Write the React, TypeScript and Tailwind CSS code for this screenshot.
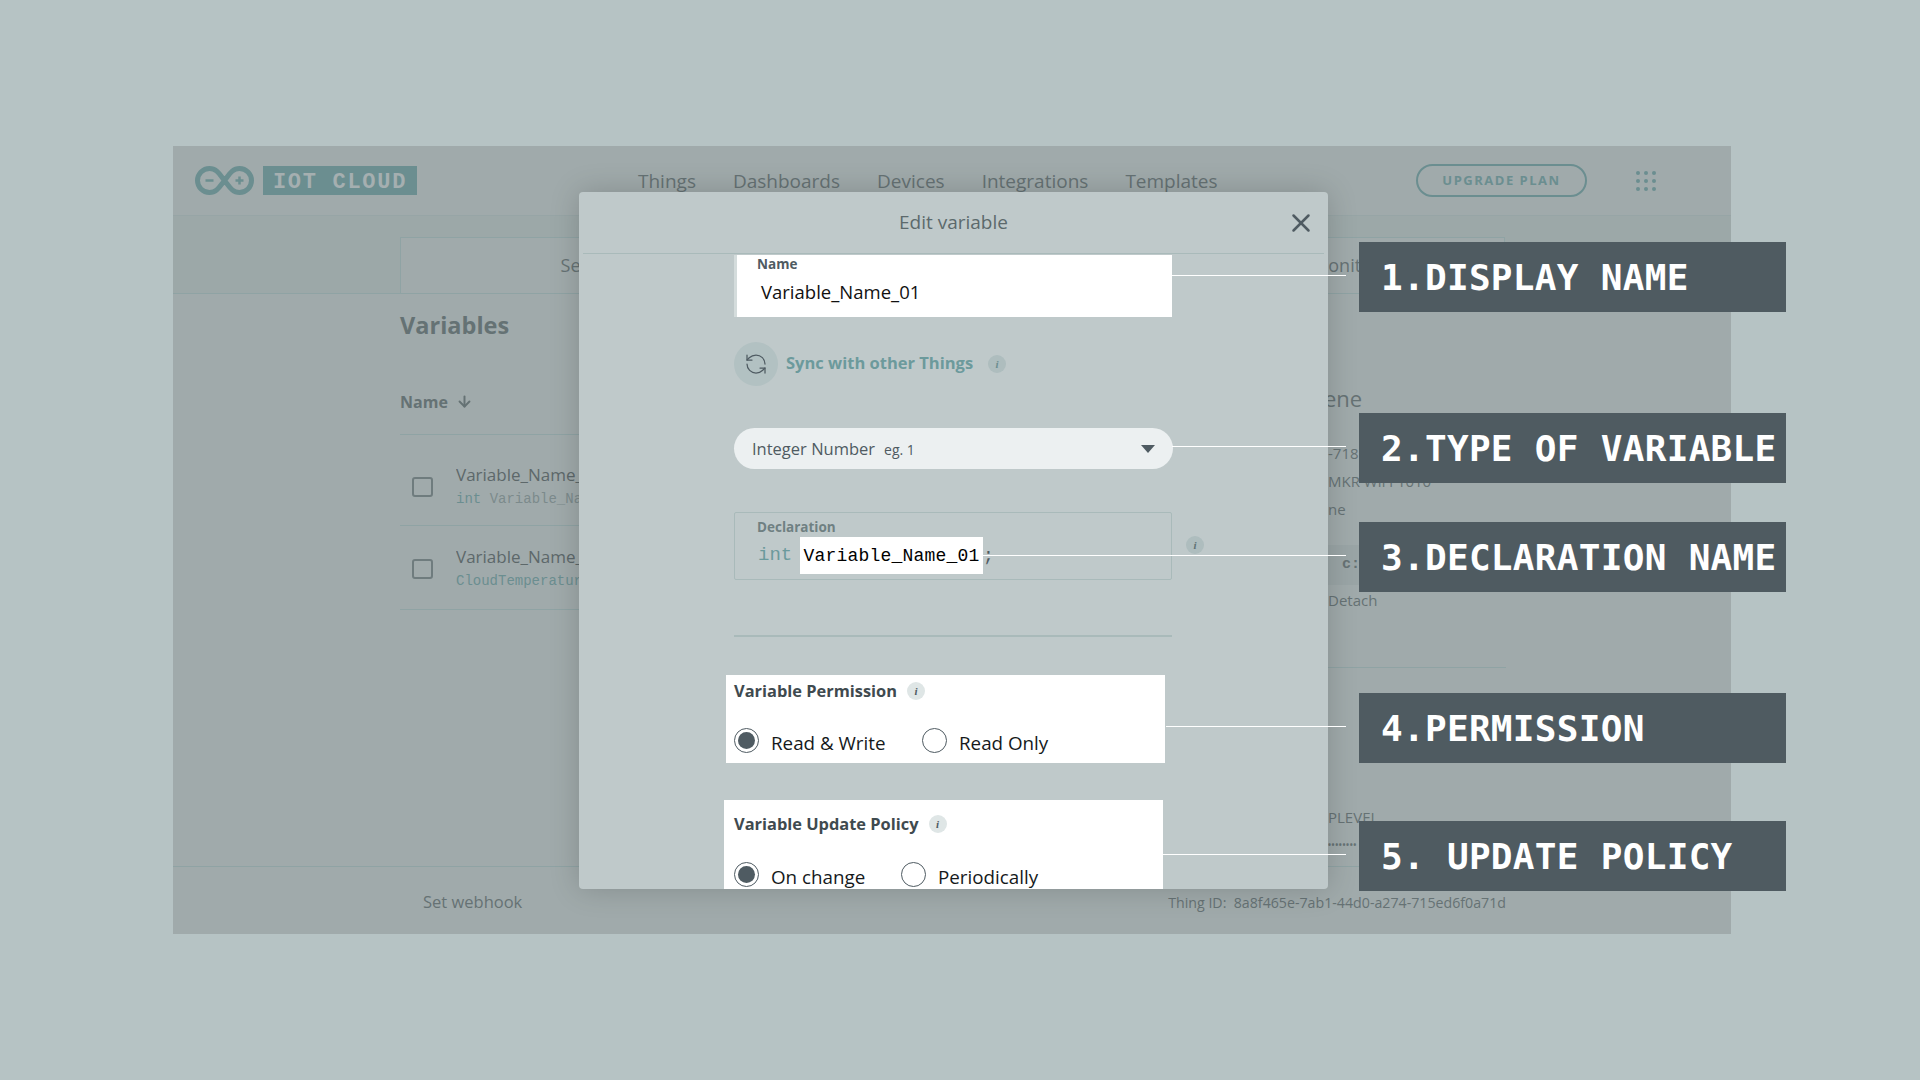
import { ArrowDown, RefreshCcw, X } from "lucide-react";

const sans = "font-['Open_Sans',sans-serif]";
const mono = "font-['Liberation_Mono',monospace]";

function InfoDot({ className = "bg-[#aebdbe] text-[#5f7375]" }: { className?: string }) {
  return (
    <span className={`flex h-[18px] w-[18px] shrink-0 items-center justify-center rounded-full font-['Liberation_Serif',serif] text-[11px] font-bold italic leading-none ${className}`}>
      i
    </span>
  );
}

function Radio({ checked, label, className }: { checked?: boolean; label: string; className?: string }) {
  return (
    <div className={`flex items-center gap-[12px] ${className ?? ""}`}>
      <span className="flex h-[25px] w-[25px] shrink-0 items-center justify-center rounded-full border-[1.5px] border-[#4f5b62] bg-white">
        {checked && <span className="h-[17px] w-[17px] rounded-full bg-[#4f5b62]" />}
      </span>
      <span className="translate-y-[2px] text-[18.8px] leading-[24px] text-[#15191b]">{label}</span>
    </div>
  );
}

function Logo() {
  return (
    <svg width="59" height="29" viewBox="0 0 59 29" fill="none" stroke="#6b8e90">
      <path
        strokeWidth="5"
        d="M14.5 2.5C22 2.5 25 9 29.5 14.5C34 20 37 26.5 44.5 26.5A12 12 0 0 0 44.5 2.5C37 2.5 34 9 29.5 14.5C25 20 22 26.5 14.5 26.5A12 12 0 0 1 14.5 2.5Z"
      />
      <path strokeWidth="2.5" d="M10.5 14.5h8M40.5 14.5h8M44.5 10.5v8" />
    </svg>
  );
}

function VariableRow({ name, type, decl, className }: { name: string; type: string; decl?: string; className?: string }) {
  return (
    <div className={`flex items-center border-b border-[#8fa3a4] ${className ?? ""}`}>
      <span className="ml-[12px] h-[20px] w-[21px] shrink-0 rounded-[3px] border-2 border-[#6f7c7e]" />
      <div className="ml-[23px] w-[300px] overflow-hidden whitespace-nowrap">
        <div className="text-[17px] leading-[24px] text-[#5d686a]">{name}</div>
        <div className={`${mono} text-[14px] leading-[24px] text-[#6b8e90]`}>
          {type}
          {decl && <span className="text-[#7c8a8c]"> {decl}</span>}
        </div>
      </div>
    </div>
  );
}

function BackgroundApp() {
  return (
    <div className={`${sans} relative flex h-[788px] w-[1558px] flex-col overflow-hidden bg-[#a0aaab]`}>
      <header className="flex h-[70px] shrink-0 items-center border-b border-[#97a5a6] pl-[22px]">
        <Logo />
        <div className={`${mono} ml-[9px] flex h-[29px] w-[154px] items-center justify-center bg-[#6b8e90] pt-[4px] text-[22px] font-bold tracking-[1.7px] text-[#a5afb0]`}>
          IOT CLOUD
        </div>
        <nav className="ml-[221px] mt-[2px] flex gap-[37px] text-[19px] text-[#667274]">
          <span>Things</span>
          <span>Dashboards</span>
          <span>Devices</span>
          <span>Integrations</span>
          <span>Templates</span>
        </nav>
        <div className="ml-auto mr-[75px] flex items-center gap-[49px]">
          <div className="flex h-[33px] w-[171px] items-center justify-center rounded-full border-2 border-[#6b8e90] pt-[1px] text-[13px] font-bold tracking-[1.5px] text-[#6b8e90]">
            UPGRADE PLAN
          </div>
          <div className="grid grid-cols-3 gap-[4px]">
            {Array.from({ length: 9 }).map((_, i) => (
              <span key={i} className="h-[4px] w-[4px] rounded-full bg-[#6b8e90]" />
            ))}
          </div>
        </div>
      </header>

      <div className="flex h-[78px] shrink-0 items-end border-b border-[#8fa3a4] bg-[#9ca8a8] pl-[227px]">
        <div className="grid h-[56px] w-[1105px] grid-cols-3 items-center border-x border-t border-[#8fa3a4] bg-[#a0aaab] text-center text-[18px] text-[#667274]">
          <span>Setup</span>
          <span>Sketch</span>
          <span>Serial Monitor</span>
        </div>
      </div>

      <div className="flex flex-1 pl-[227px]">
        <div className="w-[600px]">
          <h2 className="mt-[15px] text-[23.5px] font-bold leading-[32px] text-[#657274]">Variables</h2>
          <div className="mt-[46px] flex h-[48px] items-start gap-[8px] border-b border-[#8fa3a4] pt-[3px] text-[16px] font-bold text-[#657274]">
            <span className="leading-[24px]">Name</span>
            <ArrowDown size={17} strokeWidth={2.75} className="mt-[3px]" />
          </div>
          <VariableRow name="Variable_Name_01" type="int" decl="Variable_Name_01;" className="h-[91px] pt-[13px]" />
          <VariableRow name="Variable_Name_02" type="CloudTemperature" decl="Variable_Name_02;" className="h-[84px] pt-[2px]" />
        </div>
      </div>

      <footer className="flex h-[68px] shrink-0 items-center border-t border-[#8fa3a4] pl-[250px] pr-[225px] pt-[4px] text-[#667274]">
        <span className="text-[16.5px]">Set webhook</span>
        <span className="ml-auto text-[14.2px]">
          Thing ID:&nbsp;&nbsp;8a8f465e-7ab1-44d0-a274-715ed6f0a71d
        </span>
      </footer>

      {/* right hand column, mostly covered by the dialog */}
      <div className="absolute left-[1155px] top-[230px] w-[178px] text-[#667274]">
        <div className="-ml-[4px] text-[22px] leading-[44px]">ene</div>
        <div className="mt-[21px] text-[15px] leading-[24px]">-718b</div>
        <div className="mt-[4px] whitespace-nowrap text-[15px] leading-[24px]">MKR WiFi 1010</div>
        <div className="mt-[4px] text-[15px] leading-[24px]">ne</div>
        <div className={`${mono} mt-[24px] flex h-[40px] items-center bg-[#9aa5a6] pl-[14px] text-[15px] font-bold`}>c:</div>
        <div className="text-[15px] leading-[30px]">Detach</div>
        <div className="mt-[52px] border-t border-[#8fa3a4]" />
        <div className="mt-[137px] text-[15px] leading-[24px]">PLEVEL</div>
        <div className="mt-[8px] text-[8px] font-bold leading-[16px] tracking-[0.6px]">••••••••</div>
      </div>
    </div>
  );
}

function EditDialog() {
  return (
    <div className={`${sans} absolute left-[579px] top-[192px] flex h-[697px] w-[749px] flex-col overflow-hidden rounded-[4px] bg-[#bfc9ca] shadow-[0_0_30px_rgba(0,0,0,0.18)]`}>
      <div className="relative mx-[4px] flex h-[62px] shrink-0 items-center justify-center border-b border-[#a9baba] text-[19px] text-[#5c696c]">
        Edit variable
        <X size={30} strokeWidth={2} className="absolute right-[8px] top-[16px] text-[#4f5b62]" />
      </div>

      <div className="pl-[155px]">
        <div className="mt-[1px] h-[62px] w-[438px] border-l-[3px] border-[#d4dcdc] bg-white pl-[20px]">
          <div className="text-[13.5px] font-bold leading-[18px] text-[#4f5b62]">Name</div>
          <div className="ml-[4px] mt-[7px] text-[18.5px] leading-[24px] text-[#111]">Variable_Name_01</div>
        </div>

        <div className="mt-[25px] flex h-[44px] items-center">
          <span className="flex h-[44px] w-[44px] items-center justify-center rounded-full bg-[#b2c1c2]">
            <RefreshCcw size={24} strokeWidth={1.25} className="text-[#4f5b62]" />
          </span>
          <span className="ml-[8px] -translate-y-[1px] text-[16.5px] font-bold text-[#6c9a9c]">Sync with other Things</span>
          <InfoDot className="ml-[15px] bg-[#aebdbe] text-[#6b8e90]" />
        </div>

        <div className="mt-[42px] flex h-[41px] w-[439px] items-center rounded-full bg-[#ecf0f1] pl-[18px] pr-[18px] pt-[1px] text-[#4f5b62]">
          <span className="text-[16.5px]">Integer Number</span>
          <span className="ml-[9px] text-[14px]">eg. 1</span>
          <span className="ml-auto h-0 w-0 border-x-[7px] border-t-[8px] border-x-transparent border-t-[#4f5b62]" />
        </div>

        <div className="mt-[43px] flex items-center gap-[14px]">
          <div className="h-[68px] w-[438px] rounded-[2px] border border-[#a9baba] pl-[22px]">
            <div className="pt-[4px] text-[13.5px] font-bold leading-[20px] text-[#6f8082]">Declaration</div>
            <div className={`${mono} flex h-[37px] items-center text-[18px] leading-none`}>
              <span className="ml-[1px] w-[42px] text-[19px] text-[#6b9a9c]">int</span>
              <span className="flex h-[37px] w-[183px] items-center justify-center bg-white tracking-[0.2px] text-black">Variable_Name_01</span>
              <span className="text-[#4f5b62]">;</span>
            </div>
          </div>
          <InfoDot className="-translate-y-[1px] bg-[#aebdbe] text-[#5f7375]" />
        </div>

        <div className="mt-[55px] h-[2px] w-[438px] bg-[#a9baba]" />

        <div className="-ml-[8px] mt-[38px] h-[88px] w-[439px] bg-white pl-[8px]">
          <div className="flex items-center gap-[10px] pt-[5px]">
            <span className="text-[16.4px] font-bold leading-[22px] text-[#3f4a4f]">Variable Permission</span>
            <InfoDot className="bg-[#dfe6e6] text-[#4f5b62]" />
          </div>
          <div className="mt-[26px] flex">
            <Radio checked label="Read & Write" className="w-[188px]" />
            <Radio label="Read Only" />
          </div>
        </div>

        <div className="-ml-[10px] mt-[37px] h-[100px] w-[439px] bg-white pl-[10px]">
          <div className="flex items-center gap-[10px] pt-[13px]">
            <span className="text-[16.4px] font-bold leading-[22px] text-[#3f4a4f]">Variable Update Policy</span>
            <InfoDot className="bg-[#dfe6e6] text-[#4f5b62]" />
          </div>
          <div className="mt-[27px] flex">
            <Radio checked label="On change" className="w-[167px]" />
            <Radio label="Periodically" />
          </div>
        </div>
      </div>
    </div>
  );
}

const callouts = [
  { text: "1.DISPLAY NAME", top: "top-[242px]", line: "top-[275px] left-[1171px] w-[175px]" },
  { text: "2.TYPE OF VARIABLE", top: "top-[413px]", line: "top-[446px] left-[1172px] w-[174px]" },
  { text: "3.DECLARATION NAME", top: "top-[522px]", line: "top-[555px] left-[983px] w-[363px]" },
  { text: "4.PERMISSION", top: "top-[693px]", line: "top-[726px] left-[1166px] w-[180px]" },
  { text: "5. UPDATE POLICY", top: "top-[821px]", line: "top-[854px] left-[1163px] w-[183px]" },
];

export default function App() {
  return (
    <div className="relative h-[1080px] w-[1920px] overflow-hidden bg-[#b6c3c4] pl-[173px] pt-[146px]">
      <BackgroundApp />
      <EditDialog />
      {callouts.map((c) => (
        <div key={c.text}>
          <div className={`absolute h-px bg-white ${c.line}`} />
          <div className={`absolute left-[1359px] flex h-[70px] w-[427px] items-center bg-[#4f5b61] pl-[22px] pt-[2px] font-['DejaVu_Sans_Mono',monospace] text-[36px] font-bold tracking-[0.3px] text-white ${c.top}`}>
            {c.text}
          </div>
        </div>
      ))}
    </div>
  );
}
